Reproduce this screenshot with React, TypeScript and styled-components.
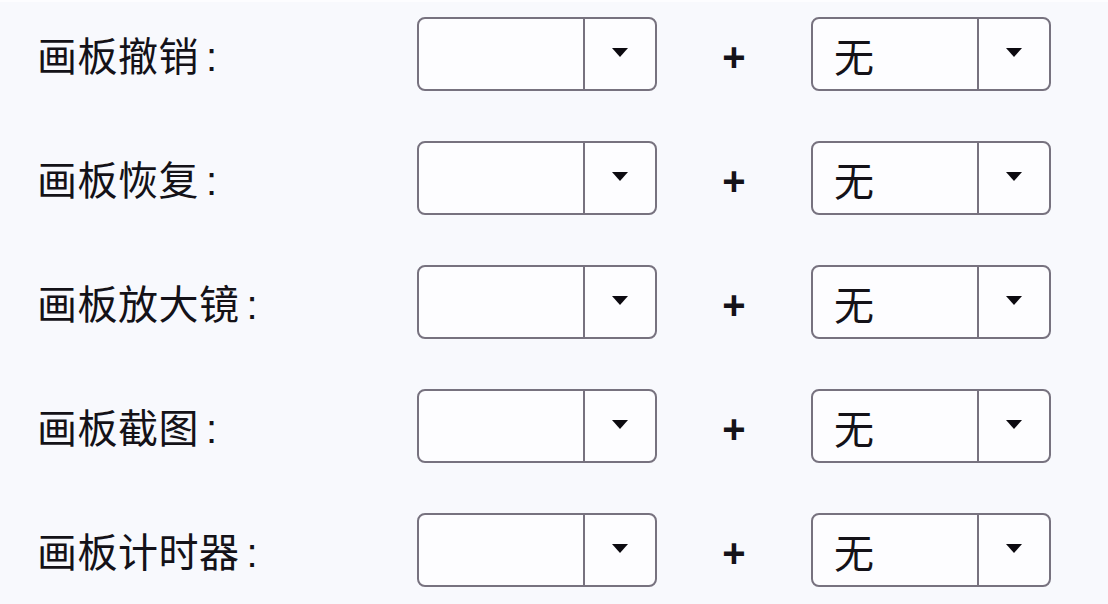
import React from "react";
import styled, { createGlobalStyle } from "styled-components";

const GlobalStyle = createGlobalStyle`
  html, body {
    margin: 0;
    padding: 0;
    background: #f8f9fd;
  }
  body {
    font-family: "Noto Sans CJK SC", "Noto Sans", sans-serif;
    color: #141218;
  }
`;

const Page = styled.div`
  width: 1108px;
  height: 604px;
  box-sizing: border-box;
  padding: 15px 0 0 37px;
  background: #f8f9fd;
  border-top: 2px solid #fdfdff;
  display: flex;
  flex-direction: column;
  gap: 50px;
  overflow: hidden;
`;

const Row = styled.div`
  display: grid;
  grid-template-columns: 380px 240px 154px 240px;
  align-items: center;
  height: 74px;
`;

const Label = styled.div`
  font-size: 40px;
  line-height: 1;
  letter-spacing: 0.5px;
  padding-top: 2px;
  color: #141218;
`;

const Colon = styled.span`
  margin-left: 7px;
  font-family: "Liberation Sans", sans-serif;
`;

const Select = styled.div`
  display: grid;
  grid-template-columns: 1fr 72px;
  height: 74px;
  box-sizing: border-box;
  border: 2px solid #77727f;
  border-radius: 8px;
  background: #fdfdff;
  overflow: hidden;
`;

const Value = styled.div`
  display: flex;
  align-items: center;
  padding-left: 21px;
  padding-top: 2px;
  font-size: 40px;
  line-height: 1;
  color: #141218;
`;

const Toggle = styled.div`
  display: flex;
  align-items: center;
  justify-content: center;
  border-left: 2px solid #77727f;
`;

const Caret = styled.span`
  width: 0;
  height: 0;
  border-left: 8px solid transparent;
  border-right: 8px solid transparent;
  border-top: 9px solid #0c0a10;
  margin-bottom: 3px;
`;

const Plus = styled.div`
  display: flex;
  justify-content: center;
  align-items: center;
  font-family: "Liberation Sans", sans-serif;
  font-size: 40px;
  font-weight: 700;
  line-height: 1;
  padding-top: 6px;
  color: #141218;
`;

const rows = ["画板撤销", "画板恢复", "画板放大镜", "画板截图", "画板计时器"];

function Dropdown({ value }: { value?: string }) {
  return (
    <Select>
      <Value>{value}</Value>
      <Toggle>
        <Caret />
      </Toggle>
    </Select>
  );
}

export default function App() {
  return (
    <>
      <GlobalStyle />
      <Page>
        {rows.map((r) => (
          <Row key={r}>
            <Label>
              {r}
              <Colon>:</Colon>
            </Label>
            <Dropdown />
            <Plus>+</Plus>
            <Dropdown value="无" />
          </Row>
        ))}
      </Page>
    </>
  );
}
